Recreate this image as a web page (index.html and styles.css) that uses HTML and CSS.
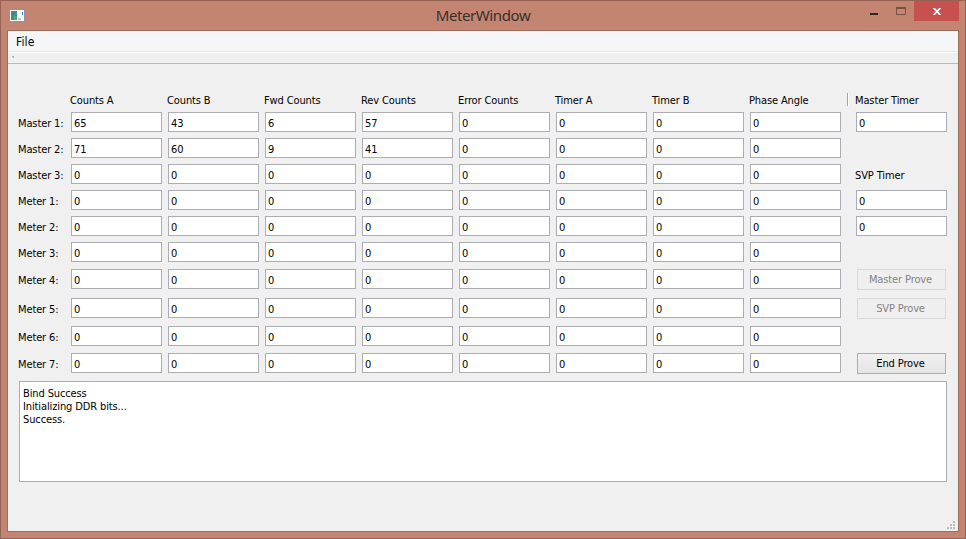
FILE: index.html
```html
<!DOCTYPE html>
<html lang="en">
<head>
<meta charset="utf-8">
<title>MeterWindow</title>
<link rel="stylesheet" href="styles.css">
</head>
<body>
<div class="window">
  <header class="titlebar">
    <svg class="app-icon" width="16" height="13" viewBox="0 0 16 13" shape-rendering="crispEdges">
      <rect width="16" height="13" fill="#8299a3"/><rect x="1" y="1" width="14" height="11" fill="#f5f8f9"/>
      <rect x="2" y="2" width="6" height="9" fill="#3f8f88"/><rect x="2" y="2" width="3" height="4" fill="#4b7d99"/><rect x="5" y="7" width="3" height="4" fill="#55a276"/>
      <rect x="13" y="3" width="1" height="3" fill="#3979a5"/><rect x="9" y="9" width="3" height="2" fill="#c5cacd"/>
    </svg>
    <h1 class="title">MeterWindow</h1>
    <div class="controls">
      <span class="control minimize"></span>
      <span class="control maximize"></span>
      <span class="control close"><svg width="8" height="7" viewBox="0 0 8 7"><path d="M.7 0 7.3 7M7.3 0 .7 7" stroke="#fff" stroke-width="1.8"/></svg></span>
    </div>
  </header>
  <main class="client">
    <nav class="menubar"><span>File</span></nav>
    <div class="toolbar"><i class="handle"></i></div>
    <section class="meters" id="meters"></section>
    <div class="log">Bind Success<br>Initializing DDR bits...<br>Success.</div>
    <footer class="status">
      <svg width="8" height="8" viewBox="0 0 8 8" fill="#bcbcbc" shape-rendering="crispEdges"><path d="M6 0h2v2H6zM3 3h2v2H3zM6 3h2v2H6zM0 6h2v2H0zM3 6h2v2H3zM6 6h2v2H6z"/></svg>
    </footer>
  </main>
</div>
<script src="app.js"></script>
</body>
</html>
```
FILE: styles.css
```css
* { box-sizing: border-box; }
body { margin: 0; font: 11px/13px "DejaVu Sans Condensed", "DejaVu Sans", sans-serif; font-stretch: condensed; letter-spacing: -.12px; color: #000; }
.window { width: 966px; height: 539px; border: 1px solid #946353; background: #c38571; padding: 0 6px 6px; }
.titlebar { height: 29px; display: grid; grid-template-columns: 140px 1fr 140px; }
.app-icon { margin: 8px 0 0 2px; }
.title { margin: 4px 0 0; text-align: center; font: 15px/20px "Noto Sans", sans-serif; color: #38302e; letter-spacing: -.4px; }
.controls { display: flex; justify-content: flex-end; }
.control { flex: none; }
.minimize { width: 8px; height: 2px; margin: 12px 18px 0 0; background: #282828; }
.maximize { width: 10px; height: 8px; margin: 6px 8px 0 0; border: 1px solid #76524a; border-top-width: 2px; }
.close { width: 45px; height: 20px; background: #c75050; display: flex; align-items: center; justify-content: center; }
.client { width: 952px; height: 502px; border: 1px solid #9f6c5c; background: #f0f0f0; display: flex; flex-direction: column; }
.menubar { height: 22px; flex: none; background: #f5f6f7; border-bottom: 1px solid #fff; box-shadow: inset 0 -1px #e6e7e8; padding: 5px 8px; font-size: 12px; letter-spacing: .1px; }
.toolbar { height: 11px; flex: none; border-bottom: 1px solid #b9b9b9; padding: 3px 4px; }
.handle { display: block; width: 2px; height: 2px; background: #b4b4b4; box-shadow: -1px 1px #fff; }
.meters { margin: 28px 11px 0; display: grid; flex: none; grid-template-columns: 46px repeat(8, 91px) 100px; column-gap: 6px; grid-template-rows: 20px repeat(5, 26px) 27px 29px 28px 27px 28px; align-items: start; }
.head { margin-left: -1px; padding-top: 2px; white-space: nowrap; }
.row-label { margin-left: -1px; padding-top: 5px; white-space: nowrap; }
.field { height: 20px; border: 1px solid #abadb3; background: #fff; padding: 4px 2px 0; }
.side { padding-left: 9px; }
.side-head { height: 13px; margin-top: 1px; padding: 1px 0 0 7px; border-left: 1px solid #a5a5a5; box-shadow: inset 1px 0 #fff; white-space: nowrap; }
.side-label { padding: 5px 0 0 8px; }
.button { display: block; width: 89px; height: 21px; margin-left: 1px; padding: 0 2px 0 0; border: 1px solid #acacac; background: linear-gradient(#f0f0f0, #e5e5e5); font: inherit; letter-spacing: inherit; color: #000; text-align: center; }
.button:disabled { border-color: #d9d9d9; background: #efefef; color: #838383; }
.log { height: 101px; flex: none; margin: 0 11px; border: 1px solid #abadb3; background: #fff; padding: 5px 3px; }
.status { flex: 1; display: flex; justify-content: flex-end; align-items: flex-end; padding: 0 3px 2px; }
```
FILE: app.js
```js
const columns = ['Counts A', 'Counts B', 'Fwd Counts', 'Rev Counts', 'Error Counts', 'Timer A', 'Timer B', 'Phase Angle'];
const rows = [
  ['Master 1:', [65, 43, 6, 57], 'field'],
  ['Master 2:', [71, 60, 9, 41]],
  ['Master 3:', [], 'label'],
  ['Meter 1:', [], 'field'],
  ['Meter 2:', [], 'field'],
  ['Meter 3:', []],
  ['Meter 4:', [], 'Master Prove'],
  ['Meter 5:', [], 'SVP Prove'],
  ['Meter 6:', []],
  ['Meter 7:', [], 'End Prove']
];

function side(kind) {
  if (!kind) return '<div></div>';
  if (kind === 'field') return '<div class="side"><div class="field">0</div></div>';
  if (kind === 'label') return '<div class="side-label">SVP Timer</div>';
  const disabled = kind === 'End Prove' ? '' : ' disabled';
  return `<div class="side"><button class="button"${disabled}>${kind}</button></div>`;
}

let html = '<div></div>' + columns.map(c => `<div class="head">${c}</div>`).join('')
  + '<div class="side-head">Master Timer</div>';
for (const [name, values, kind] of rows) {
  html += `<div class="row-label">${name}</div>`;
  for (let i = 0; i < columns.length; i++) html += `<div class="field">${values[i] ?? 0}</div>`;
  html += side(kind);
}
document.getElementById('meters').innerHTML = html;
```
